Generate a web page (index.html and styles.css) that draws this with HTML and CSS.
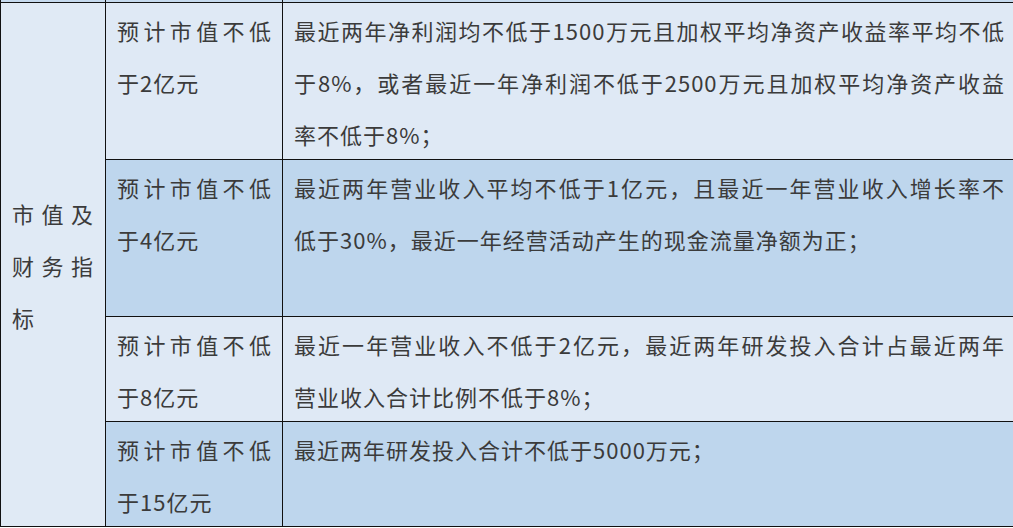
FILE: index.html
```html
<!DOCTYPE html>
<html lang="zh-CN">
<head>
<meta charset="utf-8">
<title>市值及财务指标</title>
<link rel="stylesheet" href="styles.css">
</head>
<body>
<table class="grid">
  <colgroup>
    <col class="col-cat">
    <col class="col-cap">
    <col class="col-desc">
  </colgroup>
  <tr class="prev">
    <td></td><td></td><td></td>
  </tr>
  <tr class="light">
    <td class="cat" rowspan="4">
      <div class="cell">
        <span class="ln j">市值及</span>
        <span class="ln j">财务指</span>
        <span class="ln">标</span>
      </div>
    </td>
    <td>
      <div class="cell">
        <span class="ln j">预计市值不低</span>
        <span class="ln">于2亿元</span>
      </div>
    </td>
    <td>
      <div class="cell">
        <span class="ln j">最近两年净利润均不低于1500万元且加权平均净资产收益率平均不低</span>
        <span class="ln j">于8%，或者最近一年净利润不低于2500万元且加权平均净资产收益</span>
        <span class="ln">率不低于8%；</span>
      </div>
    </td>
  </tr>
  <tr class="dark tall">
    <td>
      <div class="cell">
        <span class="ln j">预计市值不低</span>
        <span class="ln">于4亿元</span>
      </div>
    </td>
    <td>
      <div class="cell">
        <span class="ln j">最近两年营业收入平均不低于1亿元，且最近一年营业收入增长率不</span>
        <span class="ln">低于30%，最近一年经营活动产生的现金流量净额为正；</span>
      </div>
    </td>
  </tr>
  <tr class="light">
    <td>
      <div class="cell">
        <span class="ln j">预计市值不低</span>
        <span class="ln">于8亿元</span>
      </div>
    </td>
    <td>
      <div class="cell">
        <span class="ln j">最近一年营业收入不低于2亿元，最近两年研发投入合计占最近两年</span>
        <span class="ln">营业收入合计比例不低于8%；</span>
      </div>
    </td>
  </tr>
  <tr class="dark">
    <td>
      <div class="cell">
        <span class="ln j">预计市值不低</span>
        <span class="ln">于15亿元</span>
      </div>
    </td>
    <td>
      <div class="cell">
        <span class="ln">最近两年研发投入合计不低于5000万元；</span>
      </div>
    </td>
  </tr>
</table>
</body>
</html>
```

FILE: styles.css
```css
html, body {
  margin: 0;
  padding: 0;
  background: #ffffff;
  overflow: hidden;
}

body {
  width: 1013px;
  height: 528px;
}

.grid {
  border-collapse: collapse;
  table-layout: fixed;
  width: 1015px;
  margin-top: -1px;
  font-family: "Noto Sans CJK SC", "Noto Sans", sans-serif;
  font-size: 22px;
  letter-spacing: 1px;
  color: #3b3b3b;
}

.col-cat { width: 105px; }
.col-cap { width: 177px; }
.col-desc { width: 733px; }

.grid td {
  border: 1px solid #111111;
  padding: 1px 10px 0 11px;
  vertical-align: top;
  line-height: 52px;
}

.cell {
  margin-bottom: -1px;
}

.ln {
  display: block;
  text-align: left;
}

.ln.j {
  text-align: justify;
  text-align-last: justify;
}

.prev td {
  height: 2px;
  padding: 0;
  line-height: 0;
  background: #c6daee;
}

.light td {
  background: #dfe9f5;
}

.dark td {
  background: #bed6ed;
}

.grid td.cat {
  background: #e0eaf5;
  padding: 0 11px;
  vertical-align: middle;
}

.grid td.cat .cell {
  margin-bottom: 0;
}

.tall td {
  height: 155px;
}
```
